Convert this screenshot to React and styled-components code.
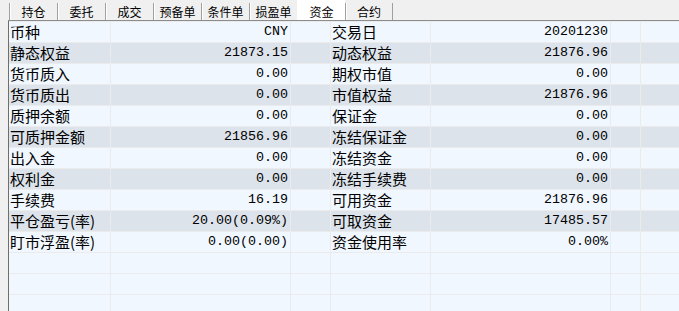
import React from 'react';
import styled, { createGlobalStyle } from 'styled-components';

const GlobalStyle = createGlobalStyle`
  html, body {
    margin: 0;
    padding: 0;
    background: #f0f0f0;
    overflow: hidden;
  }
`;

const Page = styled.div`
  display: flex;
  flex-direction: column;
  width: 679px;
  height: 311px;
  overflow: hidden;
`;

const TabBar = styled.div`
  display: flex;
  height: 20px;
  padding-left: 9px;
  background: #f0f0f0;
  border-bottom: 1px solid #8c8c8c;
  margin-left: 8px;
  padding-left: 1px;
`;

const Tab = styled.div`
  box-sizing: border-box;
  width: 48px;
  height: ${(p) => (p.$active ? '20px' : '17px')};
  margin-top: ${(p) => (p.$active ? '0' : '3px')};
  display: flex;
  align-items: center;
  justify-content: center;
  padding-top: ${(p) => (p.$active ? '3px' : '0')};
  background: ${(p) => (p.$active ? '#ffffff' : 'transparent')};
  border-left: 1px solid ${(p) => (p.$active ? '#ffffff' : '#a0a0a0')};
  box-shadow: ${(p) => (p.$active ? 'none' : 'inset 1px 0 0 #ffffff')};
  font-family: "Noto Sans CJK SC", "Noto Sans", sans-serif;
  font-size: 12px;
  line-height: 14px;
  color: #000;
  &:last-child {
    border-right: 1px solid #a0a0a0;
  }
`;

const Table = styled.div`
  margin-left: 8px;
  border-left: 1px solid #6e6e6e;
  flex: 1;
  display: flex;
  flex-direction: column;
`;

const Row = styled.div`
  display: grid;
  grid-template-columns: 102px 180px 40px 100px 180px 30px 1fr;
  height: 21px;
  flex-shrink: 0;
  box-sizing: border-box;
  border-top: 1px solid #ebebeb;
  background: ${(p) => (p.$dark ? '#dce3eb' : '#f0f7ff')};
`;

const Cell = styled.div`
  box-sizing: border-box;
  border-right: 1px solid #ebebeb;
  height: 20px;
  display: flex;
  align-items: center;
  justify-content: ${(p) => (p.$num ? 'flex-end' : 'flex-start')};
  padding: ${(p) => (p.$num ? '0 2px 0 0' : '0 0 0 1px')};
  font-family: ${(p) =>
    p.$num
      ? '"Liberation Mono", "DejaVu Sans Mono", monospace'
      : '"Noto Sans CJK SC", "Noto Sans", sans-serif'};
  font-size: ${(p) => (p.$num ? '13.33px' : '15px')};
  line-height: 20px;
  color: #000;
  white-space: nowrap;
  overflow: hidden;
  &:last-child {
    border-right: none;
  }
`;

const tabs = ['持仓', '委托', '成交', '预备单', '条件单', '损盈单', '资金', '合约'];

const rows = [
  ['币种', 'CNY', '交易日', '20201230'],
  ['静态权益', '21873.15', '动态权益', '21876.96'],
  ['货币质入', '0.00', '期权市值', '0.00'],
  ['货币质出', '0.00', '市值权益', '21876.96'],
  ['质押余额', '0.00', '保证金', '0.00'],
  ['可质押金额', '21856.96', '冻结保证金', '0.00'],
  ['出入金', '0.00', '冻结资金', '0.00'],
  ['权利金', '0.00', '冻结手续费', '0.00'],
  ['手续费', '16.19', '可用资金', '21876.96'],
  ['平仓盈亏(率)', '20.00(0.09%)', '可取资金', '17485.57'],
  ['盯市浮盈(率)', '0.00(0.00)', '资金使用率', '0.00%'],
  ['', '', '', ''],
  ['', '', '', ''],
  ['', '', '', ''],
];

export default function App() {
  return (
    <Page>
      <GlobalStyle />
      <TabBar>
        {tabs.map((t) => (
          <Tab key={t} $active={t === '资金'}>{t}</Tab>
        ))}
      </TabBar>
      <Table>
        {rows.map((r, i) => (
          <Row key={i} $dark={i < 11 && i % 2 === 1}>
            <Cell>{r[0]}</Cell>
            <Cell $num>{r[1]}</Cell>
            <Cell />
            <Cell>{r[2]}</Cell>
            <Cell $num>{r[3]}</Cell>
            <Cell />
            <Cell />
          </Row>
        ))}
      </Table>
    </Page>
  );
}
